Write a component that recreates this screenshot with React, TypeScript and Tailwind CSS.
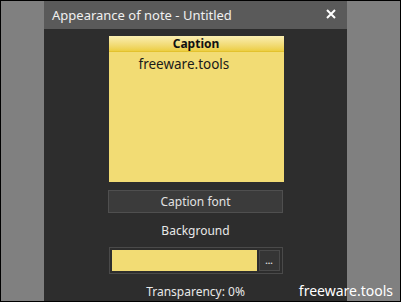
import React from 'react';

const font = { fontFamily: '"Segoe UI", "Noto Sans", "Open Sans", sans-serif' };

export default function App() {
  return (
    <div
      className="relative w-[401px] h-[302px] border border-black bg-[#808080] flex overflow-hidden"
      style={font}
    >
      <div className="w-[43px] shrink-0" />

      {/* Dialog */}
      <div className="w-[303px] shrink-0 flex flex-col bg-[#2d2d2d]">
        <div className="h-[28px] bg-[#5a5a5a] flex items-center justify-between pl-[8px] pr-[11px]">
          <span className="text-[13px] text-[#f0f0f0] leading-none">Appearance of note - Untitled</span>
          <svg width="10" height="10" viewBox="0 0 10 10" className="mb-[3px]">
            <path d="M1 1 L9 9 M9 1 L1 9" stroke="#ffffff" strokeWidth="2" />
          </svg>
        </div>

        <div className="flex flex-col items-center">
          {/* Note preview */}
          <div className="mt-[7px] ml-[1px] w-[175px] h-[146px] bg-[#f2dc74]">
            <div className="h-[16px] bg-gradient-to-b from-[#faeeb0] to-[#ecce40] border-b border-[#e3c22e] flex items-center justify-center">
              <span className="text-[12px] font-bold text-[#111] leading-none pt-[1px]">Caption</span>
            </div>
            <div className="pl-[30px] pt-[6px] text-[13.5px] text-[#1a1a1a] leading-none">freeware.tools</div>
          </div>

          <button className="mt-[8px] w-[175px] h-[23px] bg-[#3b3b3b] border border-[#4f4f4f] text-[12px] text-[#e2e2e2] leading-none">
            Caption font
          </button>

          <div className="mt-[12px] text-[12px] text-[#e8e8e8] leading-none">Background</div>

          <div className="mt-[10px] w-[174px] h-[27px] border border-[#4a4a4a] p-[2px] flex gap-[2px]">
            <div className="flex-1 bg-[#f2dc74]" />
            <div className="w-[21px] border border-[#4a4a4a] bg-[#353535] flex items-center justify-center">
              <span className="text-[9px] text-[#dddddd] leading-none font-bold">...</span>
            </div>
          </div>

          <div className="mt-[12px] text-[12px] text-[#e8e8e8] leading-none">Transparency: 0%</div>
        </div>
      </div>

      <div className="flex-1" />

      <div className="absolute right-[7px] bottom-[3px] text-[14px] text-white leading-none">freeware.tools</div>
    </div>
  );
}
